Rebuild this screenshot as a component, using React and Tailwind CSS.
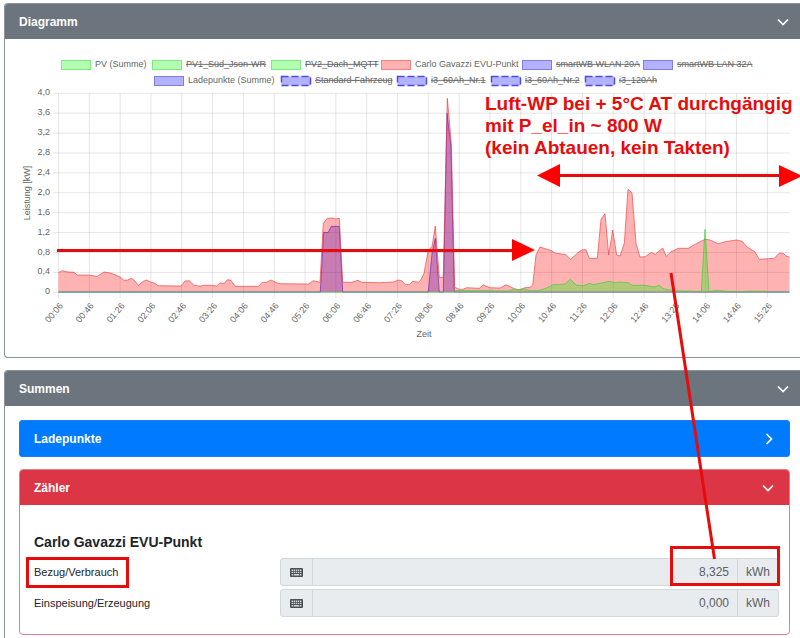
import React, { useState } from "react";

const LEGEND = [
    { x: 61, y: 60, label: "PV (Summe)", color: "green" },
    { x: 152, y: 60, label: "PV1_Süd_Json-WR", color: "green", hidden: true },
    { x: 271, y: 60, label: "PV2_Dach_MQTT", color: "green", hidden: true },
    { x: 381, y: 60, label: "Carlo Gavazzi EVU-Punkt", color: "red" },
    { x: 522, y: 60, label: "smartWB WLAN 20A", color: "blue", hidden: true },
    { x: 643, y: 60, label: "smartWB LAN 32A", color: "blue", hidden: true },
    { x: 154, y: 76, label: "Ladepunkte (Summe)", color: "blue" },
    { x: 281, y: 76, label: "Standard-Fahrzeug", color: "blue", hidden: true, dashed: true },
    { x: 397, y: 76, label: "i3_60Ah_Nr.1", color: "blue", hidden: true, dashed: true },
    { x: 491, y: 76, label: "i3_60Ah_Nr.2", color: "blue", hidden: true, dashed: true },
    { x: 585, y: 76, label: "i3_120Ah", color: "blue", hidden: true, dashed: true },
];

const LEGEND_COLORS = {
    green: { fill: "#b2ffb2", stroke: "#7deb7d" },
    red: { fill: "#ffb2b2", stroke: "#f58080" },
    blue: { fill: "#b2b2ff", stroke: "#7f7fe0" },
};

const POWER_TICKS = ["4,0", "3,6", "3,2", "2,8", "2,4", "2,0", "1,6", "1,2", "0,8", "0,4", "0"];

const TIME_TICKS = [
    "00:06", "00:46", "01:26", "02:06", "02:46", "03:26", "04:06", "04:46",
    "05:26", "06:06", "06:46", "07:26", "08:06", "08:46", "09:26", "10:06",
    "10:46", "11:26", "12:06", "12:46", "13:26", "14:06", "14:46", "15:26",
];

const GRID = { left: 58.5, right: 789.5, top: 93.3, bottom: 292.3, stepX: 30.82, stepY: 19.9 };

const METER_LINE =
    "58.5,272.7 62.3,270.7 68.3,272 74,272.3 77.3,275 89.3,275 97,276.5 104,272 111.7,273.3 120.7,277.3 123.7,280.3 127.7,280 131.3,278.3 134.3,280.3 138.3,285.3 143.3,281.3 146.7,280 151,282.3 154.3,283 158.3,285.7 181,286 185,281 189.3,280.7 193.7,285 200,286.3 203.3,285.3 212.3,285.3 216.7,286 220,283 224.3,283.3 227.3,279.7 231,280.3 235.3,286.3 258.7,286.3 262.3,282.3 266.7,282.3 271,280 276.7,282.7 280,283.7 308.3,284 313.3,280.7 320,282.3 323.3,223.3 327.3,218.3 331.7,218 336,219 339.3,218.3 342.7,282.3 351.7,282.3 358,280.3 361.7,282.3 380,282.7 393.3,282 398.3,280 401.7,280.7 405,284.3 409.3,284.7 412.7,281.3 418.3,282.3 420.7,280.3 424,273.3 428.3,250 432,246.7 435.3,226 439.3,277.3 443.3,277.3 447.3,98.3 451.3,143.3 454.7,287.3 457.3,288.3 461,290 466.7,287.7 479.3,288.3 483.3,285 490,287.7 500,288 506,284.7 515,289 518.3,290 525,287.7 530,287.3 532.7,285 536,255 540,247 551.7,250.7 555,253 566,254.7 570.7,259.3 578.3,252.3 582.3,249.7 586,249.7 589.3,258.3 597.3,258.3 601,219.3 605,213.7 608.7,255 612.7,230 616.7,255 620,256 624.3,243.3 628,189.3 632,192.7 636,243.3 640,257 645,256.7 651.3,252.3 655.3,254.3 662.7,248 666.3,256.3 670.7,252 678.3,248.3 688.3,248.3 695.7,244 705,239.3 710,240 718.3,243.7 725,241.7 736.7,240 742.3,241.3 746.7,246.7 755,252 759.3,259.3 774.3,258.3 779,253.3 783.3,253.3 786,256 789.5,257";

const PV_LINE =
    "58.5,292 454,292 456,290.5 490,290.7 508,291 515,289 520,290 525,289 530,290.7 537.3,290.7 545,288.7 553.3,284.7 565,284 570.3,279.3 576,285 583.3,285.7 590,283.3 593.3,284.7 609.3,281.3 615,282.7 620,282 627.7,282.7 632.7,285.3 645,285.3 654,287 659,285.3 664,289 676.7,290.7 701.3,291.7 705,229.3 709,291.7 716.7,290.3 727,291.3 743,292 746,291.3 765,291.3 767,292 789.5,292";

const CHARGE_LINE =
    "58.5,292 320.3,292 323.7,232.3 328,232.7 331.3,226.3 339.3,226.3 342.7,292 428.3,292 432,253.3 435.3,238.3 439.3,292 443.3,292 447,113.3 451,146.7 454.3,292 789.5,292";

function Series({ points, fill, stroke }) {
    return (
        <g>
            <polygon points={`58.5,292.3 ${points} 789.5,292.3`} fill={fill} />
            <polyline points={points} fill="none" stroke={stroke} strokeLinejoin="round" />
        </g>
    );
}

function PowerChart() {
    return (
        <svg
            viewBox="5 39 795 318"
            className="block h-auto w-full fill-[#666] font-['Liberation_Sans',sans-serif] text-[9px]"
            role="img"
            aria-label="Leistung [kW]"
        >
            {LEGEND.map((item) => (
                <g key={item.label}>
                    <rect
                        x={item.x + 0.5}
                        y={item.y + 0.5}
                        width="29"
                        height="9"
                        fill={LEGEND_COLORS[item.color].fill}
                        stroke={item.dashed ? "#4c4cd8" : LEGEND_COLORS[item.color].stroke}
                        strokeWidth={item.dashed ? 1.5 : 1}
                        strokeDasharray={item.dashed ? "7 3" : undefined}
                    />
                    <text
                        x={item.x + 34}
                        y={item.y + 7}
                        className={item.hidden ? "line-through" : ""}
                    >
                        {item.label}
                    </text>
                </g>
            ))}

            {POWER_TICKS.map((tick, i) => {
                const y = GRID.top + i * GRID.stepY;
                return (
                    <g key={tick}>
                        <line x1="53" x2={GRID.right} y1={y} y2={y} stroke="#000" strokeOpacity="0.1" />
                        <text x="50" y={y + 2} textAnchor="end">
                            {tick}
                        </text>
                    </g>
                );
            })}
            {TIME_TICKS.map((tick, i) => {
                const x = GRID.left + i * GRID.stepX;
                return (
                    <g key={tick}>
                        <line x1={x} x2={x} y1={GRID.top} y2="298" stroke="#000" strokeOpacity="0.1" />
                        <text transform={`translate(${x + 5} 306) rotate(-50)`} textAnchor="end">
                            {tick}
                        </text>
                    </g>
                );
            })}

            <Series points={CHARGE_LINE} fill="rgba(0,0,255,0.3)" stroke="rgba(0,0,255,0.5)" />
            <Series points={METER_LINE} fill="rgba(255,0,0,0.3)" stroke="rgba(235,50,50,0.6)" />
            <Series points={PV_LINE} fill="rgba(0,255,0,0.3)" stroke="rgba(40,210,40,0.6)" />

            <text transform="translate(30 193) rotate(-90)" textAnchor="middle">
                Leistung [kW]
            </text>
            <text x="424" y="337" textAnchor="middle">
                Zeit
            </text>
        </svg>
    );
}

function Chevron({ open }) {
    return (
        <svg
            viewBox="0 0 12 12"
            className={open ? "size-3" : "size-3 -rotate-90"}
            fill="none"
            stroke="currentColor"
            strokeWidth="1.7"
            aria-hidden="true"
        >
            <path d="M1 3.5 6 8.5 11 3.5" />
        </svg>
    );
}

function KeyboardIcon() {
    return (
        <svg viewBox="0 0 13 9" className="h-[9px] w-[13px]" fill="none" aria-hidden="true">
            <rect width="13" height="9" rx="1" fill="#495057" />
            <g stroke="#d3d7db" strokeWidth="1.4">
                <path d="M1.6 2.2H11.6" strokeDasharray="1.4 0.7" />
                <path d="M1.6 4.4H11.6" strokeDasharray="1.4 0.7" />
                <path d="M1.6 6.7H3M3.7 6.7H9.3M10 6.7H11.4" />
            </g>
        </svg>
    );
}

function CardHeader({ title, open, onClick, className }) {
    return (
        <h2>
            <button
                type="button"
                aria-expanded={open}
                onClick={onClick}
                className={`flex w-full items-center justify-between text-left text-[12px] font-bold text-white ${className}`}
            >
                {title}
                <Chevron open={open} />
            </button>
        </h2>
    );
}

function MeterRow({ id, label, value }) {
    return (
        <div className="grid grid-cols-[33%_67%] items-center">
            <label htmlFor={id} className="text-[11px]">
                {label}
            </label>
            <div className="flex h-7 overflow-hidden rounded-[3px] border border-[#d3d8dd] bg-[#e9ecef] text-[12px] text-[#5a6168]">
                <span className="flex w-8 shrink-0 items-center justify-center border-r border-[#d3d8dd]">
                    <KeyboardIcon />
                </span>
                <input
                    id={id}
                    type="text"
                    readOnly
                    value={value}
                    className="min-w-0 flex-1 bg-transparent pr-2 text-right outline-none"
                />
                <span className="flex w-[41px] shrink-0 items-center justify-center border-l border-[#d3d8dd]">
                    kWh
                </span>
            </div>
        </div>
    );
}

// red notes and arrows on top of the page
function Annotations() {
    return (
        <svg
            viewBox="0 0 800 638"
            className="pointer-events-none absolute top-0 left-0 h-auto w-full fill-[#e60c0c] font-['Liberation_Sans',sans-serif] text-[19px] font-bold"
        >
            <text x="485" y="110">Luft-WP bei + 5°C AT durchgängig</text>
            <text x="485" y="132">mit P_el_in ~ 800 W</text>
            <text x="485" y="154">(kein Abtauen, kein Takten)</text>
            <g fill="none" stroke="#e60c0c" strokeWidth="3">
                <path d="M57 250.5H514" />
                <path d="M558 175.5H781" />
                <path d="M671 273 714.5 559" />
                <rect x="27.5" y="558.5" width="100" height="28" />
                <rect x="671.5" y="547.5" width="107" height="37" />
            </g>
            <g fill="#f00">
                <path d="M512 239V261L535 250Z" />
                <path d="M560 164V187L537 175.5Z" />
                <path d="M779 165V187L802 176Z" />
            </g>
        </svg>
    );
}

export default function App() {
    const [open, setOpen] = useState({
        chart: true,
        sums: true,
        chargePoints: false,
        meters: true,
    });

    const toggle = (key) => setOpen({ ...open, [key]: !open[key] });

    return (
        <div className="relative w-full overflow-hidden bg-white pt-[3px] pl-1 font-['Liberation_Sans',sans-serif] text-[#212529]">
            <section className="mb-3 overflow-hidden rounded-l-[4px] border border-r-0 border-[#8b9299]">
                <CardHeader
                    title="Diagramm"
                    open={open.chart}
                    onClick={() => toggle("chart")}
                    className="h-[35px] bg-[#6c757d] pr-[11px] pl-[14px]"
                />
                {open.chart && <PowerChart />}
            </section>

            <section className="overflow-hidden rounded-tl-[4px] border-t border-l border-[#8b9299]">
                <CardHeader
                    title="Summen"
                    open={open.sums}
                    onClick={() => toggle("sums")}
                    className="h-[35px] bg-[#6c757d] pr-[11px] pl-[14px]"
                />
                {open.sums && (
                    <div className="flex flex-col gap-3 pt-[14px] pr-[10px] pb-[3px] pl-[14px]">
                        <CardHeader
                            title="Ladepunkte"
                            open={open.chargePoints}
                            onClick={() => toggle("chargePoints")}
                            className="h-[37px] rounded-[3px] border border-[#1a80ee] bg-[#007bff] px-[14px]"
                        />
                        <section className="overflow-hidden rounded-[4px] border border-[#e07f8a]">
                            <CardHeader
                                title="Zähler"
                                open={open.meters}
                                onClick={() => toggle("meters")}
                                className="h-[35px] bg-[#dc3545] pr-[15px] pl-[14px]"
                            />
                            {open.meters && (
                                <div className="pt-7 pr-[10px] pb-[17px] pl-[14px]">
                                    <h3 className="mb-[7px] text-[14px] leading-[18px] font-bold">
                                        Carlo Gavazzi EVU-Punkt
                                    </h3>
                                    <div className="flex flex-col gap-[3px]">
                                        <MeterRow id="import" label="Bezug/Verbrauch" value="8,325" />
                                        <MeterRow id="export" label="Einspeisung/Erzeugung" value="0,000" />
                                    </div>
                                </div>
                            )}
                        </section>
                    </div>
                )}
            </section>

            <Annotations />
        </div>
    );
}
